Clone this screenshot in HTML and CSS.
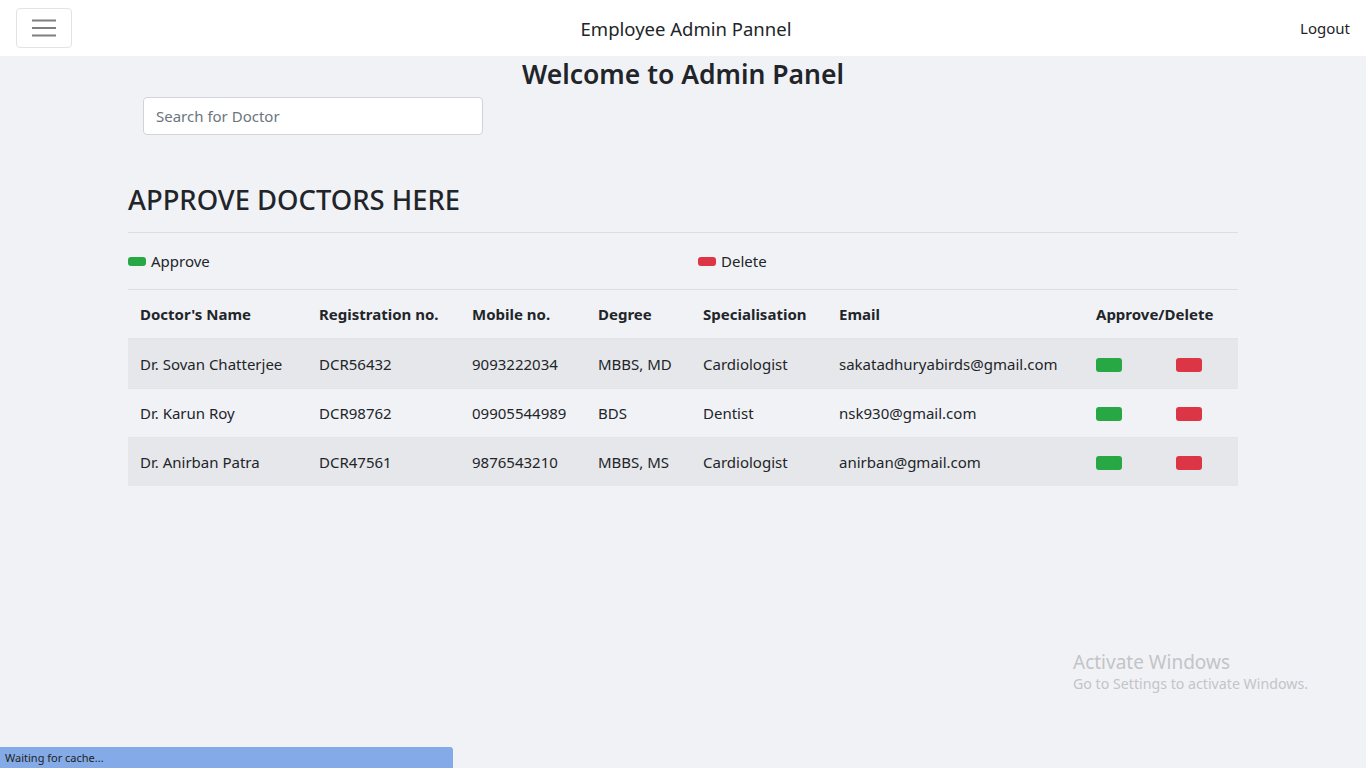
FILE: index.html
```html
<!DOCTYPE html>
<html lang="en">
<head>
<meta charset="utf-8">
<title>Employee Admin Pannel</title>
<link rel="stylesheet" href="styles.css">
</head>
<body>
<nav class="navbar">
  <button class="toggler" aria-label="menu">
    <svg width="26" height="20" viewBox="0 0 26 20"><path d="M1 2.5h24M1 10h24M1 17.5h24" stroke="#7f7f7f" stroke-width="2"/></svg>
  </button>
  <div class="brand">Employee Admin Pannel</div>
  <a class="logout" href="#">Logout</a>
</nav>
<main class="container">
  <h3 class="welcome">Welcome to Admin Panel</h3>
  <div class="search-row">
    <input class="search" type="text" placeholder="Search for Doctor">
  </div>
  <h2 class="section-title">APPROVE DOCTORS HERE</h2>
  <hr class="rule">
  <div class="legend">
    <div class="legend-item"><span class="pill green"></span>Approve</div>
    <div class="legend-item legend-del"><span class="pill red"></span>Delete</div>
  </div>
  <hr class="rule">
  <table class="table">
    <colgroup>
      <col class="c1"><col class="c2"><col class="c3"><col class="c4"><col class="c5"><col class="c6"><col class="c7">
    </colgroup>
    <thead>
      <tr><th>Doctor's Name</th><th>Registration no.</th><th>Mobile no.</th><th>Degree</th><th>Specialisation</th><th>Email</th><th>Approve/Delete</th></tr>
    </thead>
    <tbody>
      <tr><td>Dr. Sovan Chatterjee</td><td>DCR56432</td><td>9093222034</td><td>MBBS, MD</td><td>Cardiologist</td><td>sakatadhuryabirds@gmail.com</td><td><div class="actions"><button class="btn green"></button><button class="btn red"></button></div></td></tr>
      <tr><td>Dr. Karun Roy</td><td>DCR98762</td><td>09905544989</td><td>BDS</td><td>Dentist</td><td>nsk930@gmail.com</td><td><div class="actions"><button class="btn green"></button><button class="btn red"></button></div></td></tr>
      <tr><td>Dr. Anirban Patra</td><td>DCR47561</td><td>9876543210</td><td>MBBS, MS</td><td>Cardiologist</td><td>anirban@gmail.com</td><td><div class="actions"><button class="btn green"></button><button class="btn red"></button></div></td></tr>
    </tbody>
  </table>
</main>
<div class="watermark">
  <div class="wm-title">Activate Windows</div>
  <div class="wm-sub">Go to Settings to activate Windows.</div>
</div>
<div class="status">Waiting for cache...</div>
</body>
</html>
```

FILE: styles.css
```css
* { box-sizing: border-box; }
html, body { margin: 0; padding: 0; }
body {
  background: #f1f2f6;
  font-family: "Noto Sans", "Open Sans", sans-serif;
  color: #212529;
  font-size: 16px;
  height: 768px;
  overflow: hidden;
}
.navbar {
  height: 56px;
  background: #fff;
  display: flex;
  align-items: center;
  justify-content: space-between;
  padding: 0 16px;
  position: relative;
}
.toggler {
  width: 56px;
  height: 40px;
  background: #fff;
  border: 1px solid #e3e3e3;
  border-radius: 4px;
  display: flex;
  align-items: center;
  justify-content: center;
  padding: 0;
}
.brand {
  font-size: 18.5px;
  color: #212529;
  position: absolute;
  left: 50%;
  top: 16px;
  transform: translateX(-50%);
  margin-left: 3px;
}
.logout {
  color: #212529;
  text-decoration: none;
  font-size: 15px;
}
.container {
  width: 1110px;
  margin: 0 auto;
}
.welcome {
  margin: 0;
  padding-top: 0;
  text-align: center;
  font-size: 26.5px;
  font-weight: 600;
  line-height: 36px;
}
.search-row { padding: 5px 15px 0; }
.search {
  width: 340px;
  height: 38px;
  border: 1px solid #ced4da;
  border-radius: 4px;
  background: #fff;
  padding: 0 12px;
  font-family: inherit;
  font-size: 15px;
  color: #495057;
}
.search::placeholder { color: #6c757d; }
.section-title {
  margin: 47px 0 0;
  font-size: 27.4px;
  font-weight: 500;
  line-height: 36px;
}
.rule {
  border: 0;
  border-top: 1px solid #dcdee2;
  margin: 14px 0 0;
}
.legend {
  display: flex;
  height: 56px;
  align-items: center;
  font-size: 15px;
}
.legend-item { display: flex; align-items: center; width: 570px; }
.legend-del { width: auto; }
.pill {
  display: inline-block;
  width: 18px;
  height: 9px;
  border-radius: 3px;
  margin-right: 5px;
}
.green { background: #28a745; }
.red { background: #dc3545; }
.legend + .rule { margin-top: 0; }
.table {
  width: 1110px;
  border-collapse: collapse;
  table-layout: fixed;
  font-size: 15px;
}
.c1 { width: 179px; } .c2 { width: 153px; } .c3 { width: 126px; } .c4 { width: 105px; }
.c5 { width: 136px; } .c6 { width: 257px; } .c7 { width: 154px; }
.table th {
  text-align: left;
  font-weight: 700;
  padding: 0 12px;
  height: 49px;
  border-bottom: 2px solid #e2e4e8;
  font-size: 15px;
}
.table td {
  padding: 0 12px;
  height: 49px;
  border-top: 1px solid #e2e4e8;
  white-space: nowrap;
}
.table tbody tr:nth-child(odd) { background: #e6e7ea; }
.actions { display: flex; gap: 54px; align-items: center; padding-top: 2px; }
.btn {
  width: 26px;
  height: 14px;
  border: 0;
  border-radius: 3px;
  padding: 0;
}
.watermark {
  position: absolute;
  left: 1073px;
  top: 650px;
  color: #c3c4c7;
}
.wm-title { font-size: 19px; line-height: 24px; }
.wm-sub { font-size: 14.2px; line-height: 20px; }
.status {
  position: absolute;
  left: 0;
  bottom: 0;
  width: 453px;
  height: 21px;
  background: #84abe8;
  border-top-right-radius: 3px;
  font-size: 11px;
  line-height: 21px;
  padding-left: 5px;
  color: #222;
  font-family: "Noto Sans", sans-serif;
}
```
